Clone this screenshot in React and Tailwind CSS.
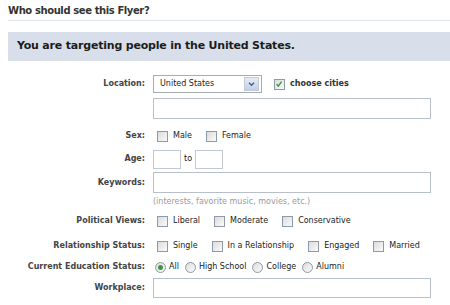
import React from "react";

function Box({ checked }) {
  return (
    <span className="relative inline-block w-[11px] h-[11px] border border-[#8e9aa8] bg-gradient-to-br from-[#dcdcdc] to-[#fafafa] shrink-0">
      {checked && (
        <svg viewBox="0 0 11 11" className="absolute inset-0 w-[9px] h-[9px]">
          <path d="M2 5 L4 7.5 L8 2" stroke="#2e9a2e" strokeWidth="1.6" fill="none" />
        </svg>
      )}
    </span>
  );
}

function Radio({ checked }) {
  return (
    <span className="relative inline-flex items-center justify-center w-[11px] h-[11px] rounded-full border border-[#8e9aa8] bg-gradient-to-br from-[#dcdcdc] to-[#fafafa] shrink-0">
      {checked && <span className="w-[5px] h-[5px] rounded-full bg-[#3a9a3a]" />}
    </span>
  );
}

function Opt({ label, radio, checked, className = "" }) {
  return (
    <span className={"inline-flex items-center " + (radio ? "gap-[3px] " : "gap-[5px] ") + className}>
      {radio ? <Radio checked={checked} /> : <Box checked={checked} />}
      <span>{label}</span>
    </span>
  );
}

function Row({ label, children, className = "" }) {
  return (
    <div className={"flex items-center " + className}>
      <div className="w-[145px] text-right font-bold text-[#444] pr-0 shrink-0">{label}</div>
      <div className="ml-[8px] flex items-center">{children}</div>
    </div>
  );
}

export default function App() {
  return (
    <div className="w-[450px] h-[305px] bg-white overflow-hidden text-[8px] text-[#222]" style={{ fontFamily: '"DejaVu Sans", Tahoma, sans-serif' }}>
      <div className="pl-[8px] pt-[4px]">
        <div className="text-[10px] font-bold text-[#333] leading-[14px] pb-[2px] border-b border-[#dde3ec] tracking-[-0.4px]">Who should see this Flyer?</div>
        <div className="mt-[11px] h-[29px] bg-[#d8dfea] flex items-center pl-[9px] text-[11px] font-bold text-[#1c1c1c] tracking-[-0.2px]">
          You are targeting people in the United States.
        </div>
      </div>
      <div className="mt-[13px]">
        <Row label="Location:" className="h-[20px]">
          <div className="w-[109px] h-[18px] border border-[#a5acb5] flex items-center justify-between pl-[6px] pr-[2px] bg-white">
            <span>United States</span>
            <span className="w-[15px] h-[14px] bg-gradient-to-b from-[#e6ecf6] to-[#c3cfe4] border border-[#c2cbdc] flex items-center justify-center">
              <svg viewBox="0 0 8 6" className="w-[7px] h-[5px]"><path d="M1 1 L4 4 L7 1" stroke="#3d5c9a" strokeWidth="1.6" fill="none" /></svg>
            </span>
          </div>
          <span className="ml-[12px] inline-flex items-center gap-[5px]"><Box checked /><span className="font-bold text-[#333]">choose cities</span></span>
        </Row>
        <Row label="" className="mt-[4px] h-[21px]">
          <div className="w-[278px] h-[21px] border border-[#b7bfcb]" />
        </Row>
        <Row label="Sex:" className="mt-[7px] h-[20px]">
          <span className="ml-[4px] flex items-center gap-[14px]">
            <Opt label="Male" />
            <Opt label="Female" />
          </span>
        </Row>
        <Row label="Age:" className="mt-[3px] h-[20px]">
          <div className="w-[28px] h-[19px] border border-[#c3c9d2]" />
          <span className="mx-[3px]">to</span>
          <div className="w-[28px] h-[19px] border border-[#c3c9d2]" />
        </Row>
        <Row label="Keywords:" className="mt-[3px] h-[21px]">
          <div className="w-[278px] h-[21px] border border-[#b7bfcb]" />
        </Row>
        <Row label="" className="h-[15px] mt-[1px]">
          <span className="text-[#9a9a9a]">(interests, favorite music, movies, etc.)</span>
        </Row>
        <Row label="Political Views:" className="mt-[2px] h-[20px]">
          <span className="ml-[4px] flex items-center gap-[14px]">
            <Opt label="Liberal" />
            <Opt label="Moderate" />
            <Opt label="Conservative" />
          </span>
        </Row>
        <Row label="Relationship Status:" className="mt-[5px] h-[20px]">
          <span className="ml-[4px] flex items-center gap-[14px]">
            <Opt label="Single" />
            <Opt label="In a Relationship" />
            <Opt label="Engaged" />
            <Opt label="Married" />
          </span>
        </Row>
        <Row label="Current Education Status:" className="mt-[1px] h-[20px]">
          <span className="ml-[2px] flex items-center gap-[6px]">
            <Opt radio checked label="All" />
            <Opt radio label="High School" />
            <Opt radio label="College" />
            <Opt radio label="Alumni" />
          </span>
        </Row>
        <Row label="Workplace:" className="mt-[1px] h-[20px]">
          <div className="w-[278px] h-[20px] border border-[#b7bfcb]" />
        </Row>
      </div>
    </div>
  );
}
